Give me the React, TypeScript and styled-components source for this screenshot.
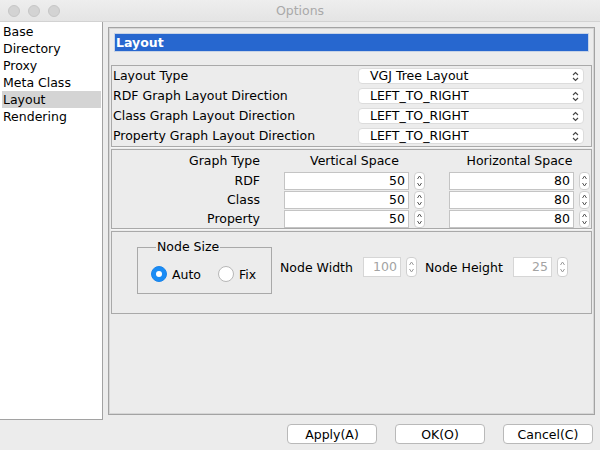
import React from "react";
import styled, { createGlobalStyle } from "styled-components";

const Global = createGlobalStyle`
  html, body { margin: 0; padding: 0; background: #ececec; }
  body { font-family: "DejaVu Sans", "Open Sans", sans-serif; font-size: 12.5px; color: #000; }
  * { box-sizing: border-box; }
`;

const Window = styled.div`
  width: 600px;
  height: 450px;
  display: flex;
  flex-direction: column;
  background: #ececec;
  overflow: hidden;
`;

const TitleBar = styled.div`
  height: 22px;
  flex: none;
  display: grid;
  grid-template-columns: 1fr auto 1fr;
  align-items: center;
  background: linear-gradient(#eeeeee, #e4e4e4);
  border-bottom: 1px solid #d2d2d2;
`;

const Lights = styled.div`
  display: flex;
  gap: 8px;
  padding-left: 8px;
`;

const Light = styled.span`
  width: 12px;
  height: 12px;
  border-radius: 50%;
  background: #d3d3d3;
  border: 1px solid #c6c6c6;
`;

const TitleText = styled.div`
  color: #a9a9a9;
  font-size: 12.5px;
  line-height: 21px;
`;

const Body = styled.div`
  height: 398px;
  flex: none;
  display: flex;
`;

const Sidebar = styled.div`
  width: 103px;
  flex: none;
  background: #fff;
  border-right: 1px solid #a2a2a2;
  border-bottom: 1px solid #a2a2a2;
  padding: 1px 1px 0 2px;
`;

const SideItem = styled.div<{ $active?: boolean }>`
  height: 17px;
  line-height: 17px;
  padding-left: 1px;
  background: ${(p) => (p.$active ? "#d4d4d4" : "transparent")};
  white-space: nowrap;
`;

const Main = styled.div`
  flex: 1;
  padding: 5px;
`;

const Panel = styled.div`
  height: 100%;
  border: 1px solid #a3a3a3;
  box-shadow: inset 0 0 0 1px #d6d6d6;
  padding: 5px 2px;
  display: flex;
  flex-direction: column;
`;

const HeaderField = styled.div`
  margin: 0 3px 13px;
  height: 19px;
  background: #2767cf;
  border: 1px solid #c7d3e6;
  color: #fff;
  font-weight: bold;
  font-size: 12.5px;
  line-height: 17px;
  padding-left: 1px;
`;

const Section = styled.div`
  border: 1px solid #a9a9a9;
  box-shadow: 0 1px 0 #f6f6f6;
  margin-bottom: 2px;
`;

const ComboGrid = styled.div`
  display: grid;
  grid-template-columns: 1fr 226px;
  grid-auto-rows: 20px;
  padding: 0 7px 0 1px;
  align-items: center;
`;

const RowLabel = styled.div`
  line-height: 20px;
  white-space: nowrap;
`;

const Combo = styled.div`
  height: 16px;
  background: #fff;
  border: 1px solid #dcdcdc;
  border-radius: 4px;
  display: flex;
  align-items: center;
  justify-content: space-between;
  padding: 0 4px 0 11px;
`;

const ComboText = styled.span`
  line-height: 14px;
`;

const UpDown = () => (
  <svg width="7" height="11" viewBox="0 0 7 11" fill="none" stroke="#444" strokeWidth="1.1">
    <path d="M1 4 L3.5 1.5 L6 4" />
    <path d="M1 7 L3.5 9.5 L6 7" />
  </svg>
);

const SpaceGrid = styled.div`
  display: grid;
  grid-template-columns: 147px 141px 141px;
  column-gap: 24px;
  grid-template-rows: 21px 19px 19px 19px;
  padding: 0 0 0 1px;
  align-items: center;
`;

const ColHead = styled.div<{ $right?: boolean }>`
  text-align: ${(p) => (p.$right ? "right" : "center")};
  line-height: 20px;
  padding-top: 1px;
  white-space: nowrap;
`;

const RowName = styled.div`
  text-align: right;
  line-height: 19px;
`;

const SpinGroup = styled.div`
  display: flex;
  align-items: center;
  gap: 5px;
`;

const NumField = styled.div<{ $disabled?: boolean; $w?: number }>`
  width: ${(p) => p.$w ?? 125}px;
  height: ${(p) => (p.$disabled ? 20 : 18)}px;
  background: #fff;
  border: 1px solid ${(p) => (p.$disabled ? "#d6d6d6" : "#c4c4c4")};
  text-align: right;
  padding-right: 3px;
  line-height: ${(p) => (p.$disabled ? 18 : 16)}px;
  color: ${(p) => (p.$disabled ? "#a3a3a3" : "#000")};
`;

const SpinButton = styled.div<{ $h?: number }>`
  width: 11px;
  height: ${(p) => p.$h ?? 18}px;
  border: 1px solid #cfcfcf;
  border-radius: 4px;
  background: #fff;
  display: flex;
  align-items: center;
  justify-content: center;
`;

const SpinIcon = ({ faded }: { faded?: boolean }) => (
  <svg width="7" height="14" viewBox="0 0 7 14" fill="none" stroke={faded ? "#9a9a9a" : "#555"} strokeWidth="1">
    <path d="M1.5 5 L3.5 2 L5.5 5" />
    <path d="M1.5 9 L3.5 12 L5.5 9" />
  </svg>
);

const NodeSection = styled.div`
  border: 1px solid #a9a9a9;
  display: flex;
  align-items: flex-start;
  padding: 7px 0 19px 25px;
`;

const Fieldset = styled.fieldset`
  margin: 0;
  width: 135px;
  border: 1px solid #a9a9a9;
  padding: 0 0 10px 13px;
  min-width: 0;
`;

const Legend = styled.legend`
  padding: 0 1px;
  margin-left: 5px;
  line-height: 16px;
`;

const RadioRow = styled.div`
  display: flex;
  align-items: center;
  height: 18px;
  margin-top: 10px;
`;

const RadioItem = styled.label`
  display: flex;
  align-items: center;
  gap: 5px;
  margin-right: 17px;
`;

const RadioCircle = styled.span<{ $checked?: boolean }>`
  width: 16px;
  height: 16px;
  border-radius: 50%;
  display: flex;
  align-items: center;
  justify-content: center;
  background: ${(p) => (p.$checked ? "#1a8cf5" : "#fff")};
  border: 1px solid ${(p) => (p.$checked ? "#1a84ea" : "#b7b7b7")};
  &::after {
    content: "";
    width: 6px;
    height: 6px;
    border-radius: 50%;
    background: #fff;
    display: ${(p) => (p.$checked ? "block" : "none")};
  }
`;

const NodeGroup = styled.div`
  display: flex;
  align-items: center;
  margin: 18px 0 0 8px;
`;

const NodeLabel = styled.span`
  margin-right: 10px;
  white-space: nowrap;
`;

const NodeSpin = styled.div`
  display: flex;
  align-items: center;
  gap: 5px;
  margin-right: 8px;
`;

const Footer = styled.div`
  flex: 1;
  display: flex;
  justify-content: flex-end;
  align-items: flex-start;
  gap: 18px;
  padding: 4px 7px 0 0;
`;

const Button = styled.button`
  width: 90px;
  height: 20px;
  background: #fff;
  border: 1px solid #b9b9b9;
  border-radius: 4px;
  font-family: inherit;
  font-size: 12.5px;
  line-height: 17px;
  padding: 0;
  color: #000;
`;

const combos = [
  ["Layout Type", "VGJ Tree Layout"],
  ["RDF Graph Layout Direction", "LEFT_TO_RIGHT"],
  ["Class Graph Layout Direction", "LEFT_TO_RIGHT"],
  ["Property Graph Layout Direction", "LEFT_TO_RIGHT"],
];

const spaces = [
  ["RDF", "50", "80"],
  ["Class", "50", "80"],
  ["Property", "50", "80"],
];

const sideItems = ["Base", "Directory", "Proxy", "Meta Class", "Layout", "Rendering"];

export default function App() {
  return (
    <>
      <Global />
      <Window>
        <TitleBar>
          <Lights>
            <Light />
            <Light />
            <Light />
          </Lights>
          <TitleText>Options</TitleText>
          <div />
        </TitleBar>
        <Body>
          <Sidebar>
            {sideItems.map((s) => (
              <SideItem key={s} $active={s === "Layout"}>
                {s}
              </SideItem>
            ))}
          </Sidebar>
          <Main>
            <Panel>
              <HeaderField>Layout</HeaderField>
              <Section>
                <ComboGrid>
                  {combos.map(([l, v]) => (
                    <React.Fragment key={l}>
                      <RowLabel>{l}</RowLabel>
                      <Combo>
                        <ComboText>{v}</ComboText>
                        <UpDown />
                      </Combo>
                    </React.Fragment>
                  ))}
                </ComboGrid>
              </Section>
              <Section>
                <SpaceGrid>
                  <ColHead $right>Graph Type</ColHead>
                  <ColHead>Vertical Space</ColHead>
                  <ColHead>Horizontal Space</ColHead>
                  {spaces.map(([n, v, h]) => (
                    <React.Fragment key={n}>
                      <RowName>{n}</RowName>
                      <SpinGroup>
                        <NumField>{v}</NumField>
                        <SpinButton>
                          <SpinIcon />
                        </SpinButton>
                      </SpinGroup>
                      <SpinGroup>
                        <NumField>{h}</NumField>
                        <SpinButton>
                          <SpinIcon />
                        </SpinButton>
                      </SpinGroup>
                    </React.Fragment>
                  ))}
                </SpaceGrid>
              </Section>
              <NodeSection>
                <Fieldset>
                  <Legend>Node Size</Legend>
                  <RadioRow>
                    <RadioItem>
                      <RadioCircle $checked />
                      Auto
                    </RadioItem>
                    <RadioItem>
                      <RadioCircle />
                      Fix
                    </RadioItem>
                  </RadioRow>
                </Fieldset>
                <NodeGroup>
                  <NodeLabel>Node Width</NodeLabel>
                  <NodeSpin>
                    <NumField $disabled $w={38}>100</NumField>
                    <SpinButton $h={20}>
                      <SpinIcon faded />
                    </SpinButton>
                  </NodeSpin>
                  <NodeLabel>Node Height</NodeLabel>
                  <NodeSpin>
                    <NumField $disabled $w={39}>25</NumField>
                    <SpinButton $h={20}>
                      <SpinIcon faded />
                    </SpinButton>
                  </NodeSpin>
                </NodeGroup>
              </NodeSection>
            </Panel>
          </Main>
        </Body>
        <Footer>
          <Button>Apply(A)</Button>
          <Button>OK(O)</Button>
          <Button>Cancel(C)</Button>
        </Footer>
      </Window>
    </>
  );
}
